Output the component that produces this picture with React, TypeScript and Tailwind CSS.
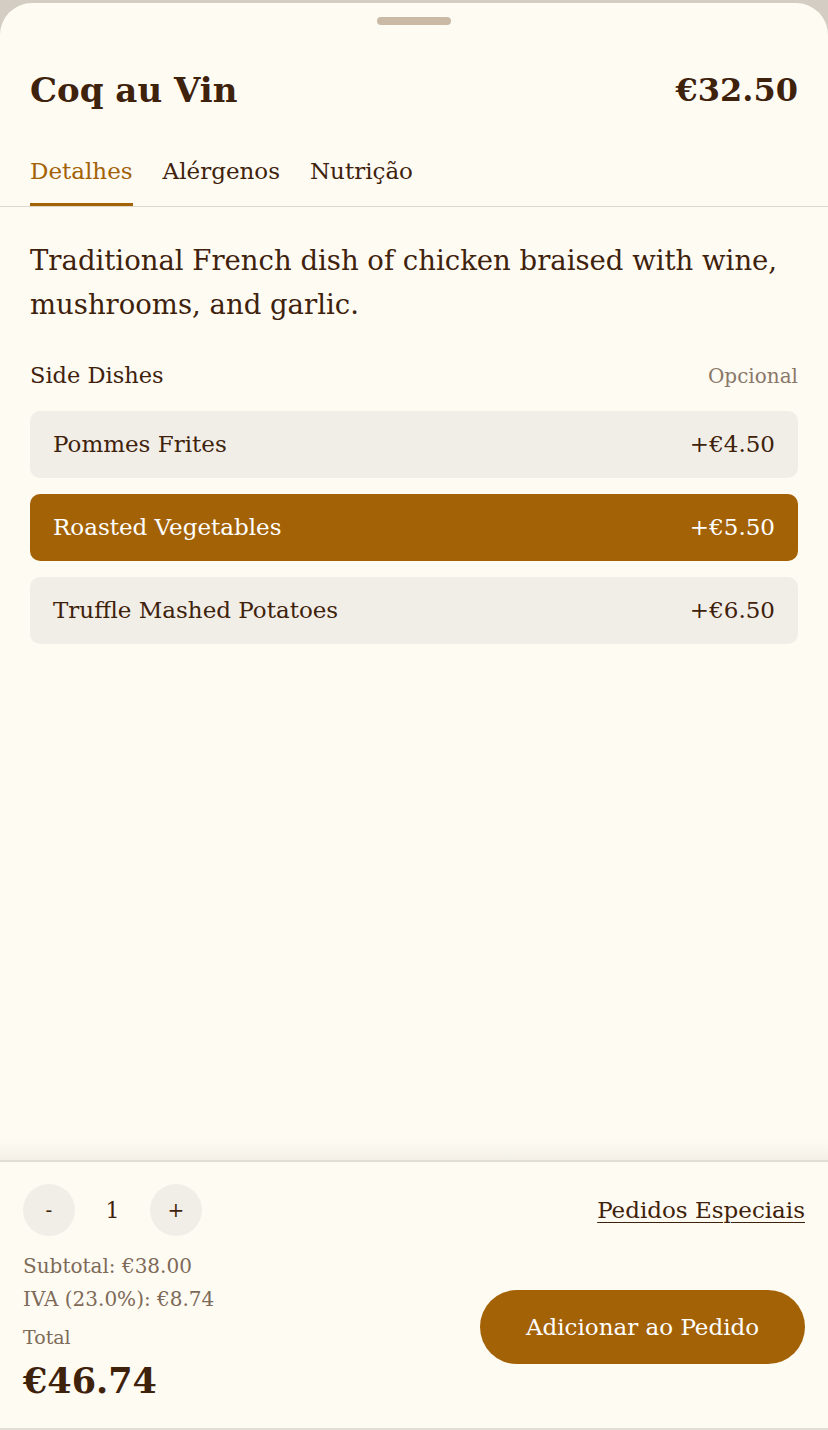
import { useState } from 'react'

interface SideOption { name: string; price: number }

const sides: SideOption[] = [
  { name: 'Pommes Frites', price: 4.5 },
  { name: 'Roasted Vegetables', price: 5.5 },
  { name: 'Truffle Mashed Potatoes', price: 6.5 },
]

const serif = { fontFamily: '"DejaVu Serif", "Liberation Serif", serif' }

export default function App() {
  const [tab, setTab] = useState('Detalhes')
  const [selected, setSelected] = useState(1)
  const [qty, setQty] = useState(1)

  const subtotal = (32.5 + (selected >= 0 ? sides[selected].price : 0)) * qty
  const iva = subtotal * 0.23
  const fmt = (n: number) => `€${n.toFixed(2)}`

  return (
    <div className="h-[1430px] bg-[#d3cdc3] pt-[3px] flex flex-col text-[#3f220c]" style={serif}>
      <div className="flex-1 flex flex-col bg-[#fefbf3] rounded-t-[32px] overflow-hidden">
        {/* Handle */}
        <div className="flex justify-center pt-[14px]">
          <div className="w-[74px] h-[8px] rounded-full bg-[#c9b9a5]" />
        </div>

        {/* Header */}
        <div className="h-[50px] flex items-center justify-between px-[30px] mt-[40px]">
          <h1 className="text-[34px] font-bold leading-none">Coq au Vin</h1>
          <span className="text-[32px] font-bold leading-none">€32.50</span>
        </div>

        {/* Tabs */}
        <div className="flex gap-[30px] px-[30px] mt-[41px] border-b border-[#ddd8cf]">
          {['Detalhes', 'Alérgenos', 'Nutrição'].map(t => (
            <button
              key={t}
              onClick={() => setTab(t)}
              className={`pb-[17px] text-[23px] leading-[30px] border-b-[3px] ${
                tab === t ? 'border-[#a36206] text-[#a36206]' : 'border-transparent'
              }`}
            >
              {t}
            </button>
          ))}
        </div>

        {/* Body */}
        <div className="flex-1 px-[30px] pt-[31px]">
          <p className="text-[27.5px] leading-[44px]">
            Traditional French dish of chicken braised with wine, mushrooms, and garlic.
          </p>

          <div className="h-[30px] flex items-center justify-between mt-[35px]">
            <span className="text-[22.5px]">Side Dishes</span>
            <span className="text-[20px] text-[#8a7868]">Opcional</span>
          </div>

          <div className="flex flex-col gap-[16px] mt-[20px]">
            {sides.map((s, i) => (
              <button
                key={s.name}
                onClick={() => setSelected(selected === i ? -1 : i)}
                className={`h-[67px] rounded-[10px] px-[23px] flex items-center justify-between text-[23px] ${
                  selected === i ? 'bg-[#a36206] text-white' : 'bg-[#f1eee7]'
                }`}
              >
                <span>{s.name}</span>
                <span>+{fmt(s.price)}</span>
              </button>
            ))}
          </div>
        </div>

        {/* Footer */}
        <div className="relative h-[270px] border-t-2 border-b-2 border-[#e3ded5] px-[23px] pt-[22px]">
          <div className="absolute left-0 right-0 -top-[22px] h-[20px] bg-gradient-to-b from-transparent to-[#f4f0e8] pointer-events-none" />
          <div className="flex items-center justify-between">
            <div className="flex items-center">
              <button
                onClick={() => setQty(Math.max(1, qty - 1))}
                className="w-[52px] h-[52px] rounded-full bg-[#f1eee7] text-[20px]"
              >
                -
              </button>
              <span className="w-[75px] text-center text-[22px]">{qty}</span>
              <button
                onClick={() => setQty(qty + 1)}
                className="w-[52px] h-[52px] rounded-full bg-[#f1eee7] text-[20px]"
              >
                +
              </button>
            </div>
            <button className="text-[23px] underline underline-offset-[4px] decoration-1">Pedidos Especiais</button>
          </div>

          <div className="flex items-center justify-between mt-[14px]">
            <div className="flex flex-col text-[20px] text-[#7d6a58] leading-[33px]">
              <span>Subtotal: {fmt(subtotal)}</span>
              <span>IVA (23.0%): {fmt(iva)}</span>
              <span className="mt-[5px] text-[19px]">Total</span>
              <span className="text-[35px] font-bold text-[#3f220c] leading-[46px] mt-[4px]">{fmt(subtotal + iva)}</span>
            </div>
            <button className="w-[325px] h-[74px] rounded-full bg-[#a36206] text-white text-[23px]">
              Adicionar ao Pedido
            </button>
          </div>
        </div>
      </div>
    </div>
  )
}
